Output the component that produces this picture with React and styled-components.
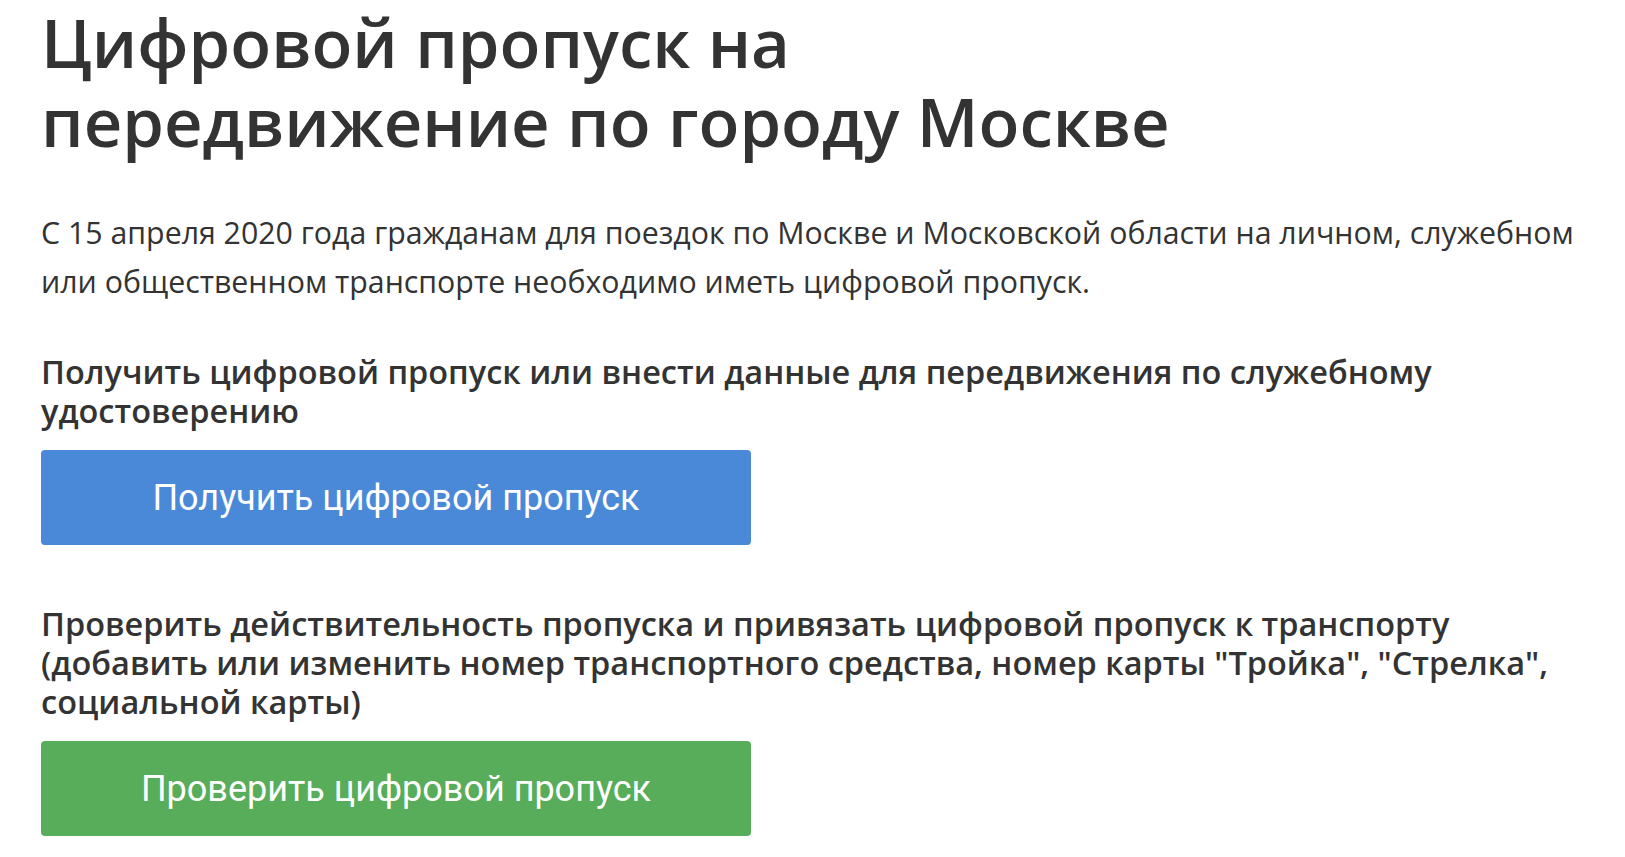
import React from "react";
import styled, { createGlobalStyle } from "styled-components";

const Global = createGlobalStyle`
  html, body {
    margin: 0;
    padding: 0;
    background: #ffffff;
  }
  body {
    font-family: "Open Sans", Lato, sans-serif;
    color: #333333;
  }
`;

export default function App() {
  return (
    <>
      <Global />
      <Page>
        <Title>
          Цифровой пропуск на
          <br />
          передвижение по городу Москве
        </Title>
        <Lead>
          С 15 апреля 2020 года гражданам для поездок по Москве и Московской области на личном, служебном
          или общественном транспорте необходимо иметь цифровой пропуск.
        </Lead>
        <Block $top={46}>
          <Caption>
            Получить цифровой пропуск или внести данные для передвижения по служебному удостоверению
          </Caption>
          <Action $tone="blue">Получить цифровой пропуск</Action>
        </Block>
        <Block $top={59}>
          <Caption>
            Проверить действительность пропуска и привязать цифровой пропуск к транспорту (добавить или
            изменить номер транспортного средства, номер карты "Тройка", "Стрелка", социальной карты)
          </Caption>
          <Action $tone="green">Проверить цифровой пропуск</Action>
        </Block>
      </Page>
    </>
  );
}

const Page = styled.main`
  padding: 8px 20px 0 41px;
  display: flex;
  flex-direction: column;
`;

const Title = styled.h1`
  margin: 0;
  font-size: 67px;
  line-height: 79px;
  font-weight: 600;
  color: #333333;
  margin-top: -5px;
`;

const Lead = styled.p`
  margin: 47px 0 0;
  max-width: 1570px;
  font-size: 30.3px;
  line-height: 49px;
  font-weight: 400;
  color: #333333;
`;

const Block = styled.section`
  margin-top: ${(p) => p.$top}px;
  display: flex;
  flex-direction: column;
  gap: 20px;
`;

const Caption = styled.h3`
  margin: 0;
  max-width: 1560px;
  font-size: 32.5px;
  line-height: 39px;
  font-weight: 600;
  color: #333333;
`;

const tones = {
  blue: "#4a88d8",
  green: "#57ad5a",
};

const Action = styled.button`
  width: 710px;
  height: 95px;
  border: 0;
  border-radius: 4px;
  background: ${(p) => tones[p.$tone]};
  color: #ffffff;
  font-family: Roboto, "Liberation Sans", sans-serif;
  font-size: 36px;
  font-weight: 400;
  cursor: pointer;
`;
